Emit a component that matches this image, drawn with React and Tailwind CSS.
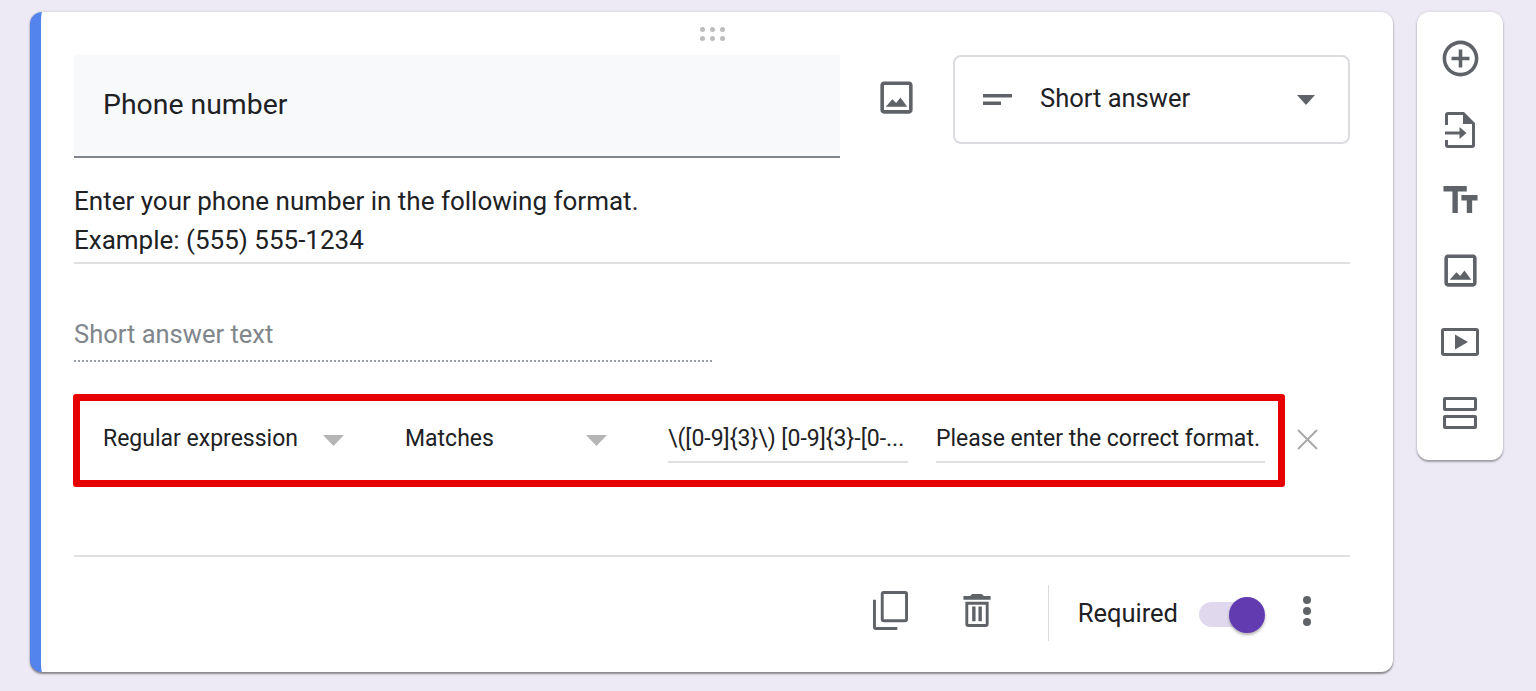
import React from 'react';

const Icon = ({ className, children, viewBox = '0 0 24 24' }) => (
  <svg viewBox={viewBox} className={className} fill="#5f6368">{children}</svg>
);

const imagePath = 'M19 5v14H5V5h14m0-2H5c-1.100 0-2 .9-2 2v14c0 1.100.9 2 2 2h14c1.100 0 2-.9 2-2V5c0-1.100-.9-2-2-2zM6 17.200l3.700-4.200 2.100 2.100 2.400-3.100L18 17.200z';

const Caret = ({ className }) => (
  <svg viewBox="0 0 21 11" className={className} fill="#b5b5b5"><path d="M0 0h21L10.500 11z" /></svg>
);

const Sidebar = () => (
  <aside className="w-[86px] h-[448px] ml-[24px] bg-white rounded-[12px] shadow-[0_2px_2px_rgba(0,0,0,0.3),0_0_3px_rgba(0,0,0,0.15)] flex flex-col items-center pt-[25px] shrink-0">
    <Icon className="w-[43px] h-[43px] shrink-0">
      <path d="M13 7h-2v4H7v2h4v4h2v-4h4v-2h-4V7zm-1-5C6.480 2 2 6.480 2 12s4.480 10 10 10 10-4.480 10-10S17.520 2 12 2zm0 18c-4.410 0-8-3.590-8-8s3.590-8 8-8 8 3.590 8 8-3.590 8-8 8z" />
    </Icon>
    <Icon className="w-[30px] h-[36px] mt-[32px] shrink-0" viewBox="0 0 30 36">
      <path d="M3 0h16l11 11v22a3 3 0 0 1-3 3H3a3 3 0 0 1-3-3v-5h3v5h24V12H18V3H3v10H0V3a3 3 0 0 1 3-3z" />
      <path d="M0 19.500h14.500v-4.500l7 6-7 6v-4.500H0z" />
    </Icon>
    <Icon className="w-[43px] h-[43px] mt-[30px] shrink-0">
      <path d="M2.500 4.500v3h5v12h3v-12h5v-3h-13zm19 5h-9v3h3v7h3v-7h3v-3z" />
    </Icon>
    <Icon className="w-[43px] h-[43px] mt-[28px] shrink-0">
      <path d={imagePath} />
    </Icon>
    <Icon className="w-[38px] h-[28px] mt-[36px] shrink-0" viewBox="0 0 38 28">
      <path fillRule="evenodd" d="M3 0h32a3 3 0 0 1 3 3v22a3 3 0 0 1-3 3H3a3 3 0 0 1-3-3V3a3 3 0 0 1 3-3zm0 3v22h32V3z" />
      <path d="M14 6.500v15L27 14z" />
    </Icon>
    <Icon className="w-[34px] h-[32px] mt-[41px] shrink-0" viewBox="0 0 34 32">
      <path fillRule="evenodd" d="M2 0h30a2 2 0 0 1 2 2v10a2 2 0 0 1-2 2H2a2 2 0 0 1-2-2V2a2 2 0 0 1 2-2zm1 3v8h28V3z" />
      <path fillRule="evenodd" d="M2 18h30a2 2 0 0 1 2 2v10a2 2 0 0 1-2 2H2a2 2 0 0 1-2-2V20a2 2 0 0 1 2-2zm1 3v8h28v-8z" />
    </Icon>
  </aside>
);

const DragHandle = () => (
  <div className="absolute top-[15px] left-[659px] grid grid-cols-3 gap-x-[5px] gap-y-[4px]">
    {[0, 1, 2, 3, 4, 5].map((i) => (
      <span key={i} className="w-[5px] h-[5px] rounded-full bg-[#bdbdbd]" />
    ))}
  </div>
);

const HeaderRow = () => (
  <div className="flex items-start">
    <div className="w-[766px] h-[103px] bg-[#f8f9fa] border-b-2 border-[#80868b] pl-[29px] flex items-center text-[28.400px] text-[#202124]">
      Phone number
    </div>
    <Icon className="w-[43px] h-[43px] mt-[21px] ml-[35px] shrink-0">
      <path d={imagePath} />
    </Icon>
    <div className="w-[397px] h-[89px] ml-[35px] border-2 border-[#dadce0] rounded-[8px] flex items-center pl-[28px] pr-[33px] text-[25.500px] text-[#202124]">
      <Icon className="w-[29px] h-[11px] shrink-0" viewBox="0 0 29 11">
        <path d="M0 0h29v3.500H0zM0 7.500h18V11H0z" />
      </Icon>
      <span className="ml-[28px] flex-1 pb-[2px]">Short answer</span>
      <svg viewBox="0 0 18 10" className="w-[18px] h-[10px]" fill="#5f6368"><path d="M0 0h18L9 10z" /></svg>
    </div>
  </div>
);

const Validation = () => (
  <div className="w-[1212px] h-[93px] -ml-px border-[7px] border-[#e60000] rounded-[3px] flex items-center pl-[23px] text-[23px] text-[#202124]">
    <span className="w-[220px] mb-[3px]">Regular expression</span>
    <Caret className="w-[21px] h-[11px] shrink-0" />
    <span className="w-[181px] ml-[61px] mb-[3px]">Matches</span>
    <Caret className="w-[21px] h-[11px] shrink-0" />
    <div className="w-[240px] ml-[61px] mb-[2px] h-[47px] border-b-2 border-[#e0e0e0] flex items-center whitespace-nowrap overflow-hidden">
      {'\\([0-9]{3}\\) [0-9]{3}-[0-...'}
    </div>
    <div className="w-[329px] ml-[28px] mb-[2px] h-[47px] border-b-2 border-[#e0e0e0] flex items-center whitespace-nowrap">
      Please enter the correct format.
    </div>
  </div>
);

const Footer = () => (
  <div className="flex items-center justify-end h-[56px] mt-[28px] pr-[39px]">
    <Icon className="w-[35px] h-[39px] mb-[5px] shrink-0" viewBox="0 0 36 40">
      <path fillRule="evenodd" d="M11 0h22a3 3 0 0 1 3 3v26a3 3 0 0 1-3 3H11a3 3 0 0 1-3-3V3a3 3 0 0 1 3-3zm0 3v26h22V3z" />
      <path d="M0 9h3v28h22v3H3a3 3 0 0 1-3-3z" />
    </Icon>
    <Icon className="w-[28px] h-[33px] ml-[55px] mb-[5px] shrink-0" viewBox="0 0 28 34">
      <path d="M9 0h10l2 2h7v4H0V2h7z" />
      <path fillRule="evenodd" d="M2 8h24v23a3 3 0 0 1-3 3H5a3 3 0 0 1-3-3zm3 3v20h18V11z" />
      <path d="M9 13h3.500v15H9zM15.500 13H19v15h-3.500z" />
    </Icon>
    <div className="w-px h-[56px] bg-[#dadce0] ml-[57px]" />
    <span className="ml-[29px] text-[25.500px] text-[#202124]">Required</span>
    <div className="relative ml-[21px] mt-[3px] w-[56px] h-[25px] rounded-full bg-[#e0d9ee] shrink-0">
      <span className="absolute -top-[5px] left-[30px] w-[36px] h-[36px] rounded-full bg-[#633bb0] shadow-[0_2px_3px_rgba(0,0,0,0.3)]" />
    </div>
    <div className="ml-[48px] mb-[5px] flex flex-col gap-[3px] shrink-0">
      <span className="w-[8px] h-[8px] rounded-full bg-[#5f6368]" />
      <span className="w-[8px] h-[8px] rounded-full bg-[#5f6368]" />
      <span className="w-[8px] h-[8px] rounded-full bg-[#5f6368]" />
    </div>
  </div>
);

export default function App() {
  return (
    <div className="w-[1536px] h-[691px] overflow-hidden bg-[#edeaf6] pt-[12px] pl-[30px] flex items-start font-['Roboto',sans-serif]">
      <main className="relative w-[1363px] h-[660px] shrink-0 bg-white rounded-[12px] border-l-[11px] border-[#5383ec] shadow-[0_2px_2px_rgba(0,0,0,0.4),0_0_3px_rgba(0,0,0,0.15)] pt-[43px] pl-[33px] pr-[43px]">
        <DragHandle />
        <HeaderRow />
        <div className="mt-[24px] text-[26px] leading-[39px] text-[#202124] border-b-2 border-[#e0e0e0] pb-[2px]">
          <p>Enter your phone number in the following format.</p>
          <p>Example: (555) 555-1234</p>
        </div>
        <div className="w-[638px] mt-[51px] pb-[7px] border-b-2 border-dotted border-[#9aa0a6] text-[25.500px] text-[#80868b]">
          Short answer text
        </div>
        <div className="flex items-center mt-[32px]">
          <Validation />
          <svg viewBox="0 0 21 21" className="w-[21px] h-[21px] ml-[12px] mb-[3px]" stroke="#a8a8a8" strokeWidth="2" fill="none">
            <path d="M1 1l19 19M20 1L1 20" />
          </svg>
        </div>
        <div className="mt-[68px] h-[2px] bg-[#e0e0e0]" />
        <Footer />
      </main>
      <Sidebar />
    </div>
  );
}
